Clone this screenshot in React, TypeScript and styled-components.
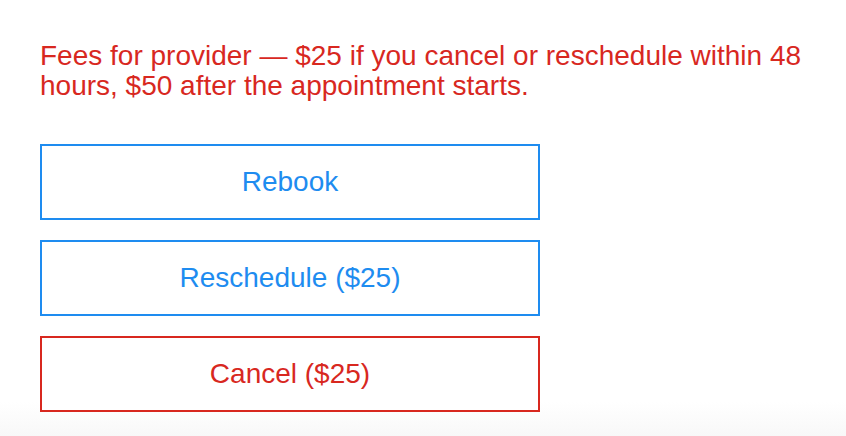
import styled, { createGlobalStyle } from "styled-components";

const GlobalStyle = createGlobalStyle`
  html, body {
    margin: 0;
    padding: 0;
  }
  body {
    height: 436px;
    background: linear-gradient(to bottom, #ffffff 0, #ffffff 402px, #f8f8f8 436px);
    font-family: "Liberation Sans", Arial, sans-serif;
  }
`;

const Page = styled.div`
  padding: 41px 40px 0 40px;
  display: flex;
  flex-direction: column;
`;

const Notice = styled.p`
  margin: 0;
  width: 780px;
  color: #d8281f;
  font-size: 28px;
  line-height: 30px;
`;

const Actions = styled.div`
  margin-top: 43px;
  display: flex;
  flex-direction: column;
  gap: 20px;
  width: 500px;
`;

const ActionButton = styled.button<{ $danger?: boolean }>`
  height: 76px;
  box-sizing: border-box;
  border: 2px solid ${(p) => (p.$danger ? "#d8281f" : "#1e8cf0")};
  color: ${(p) => (p.$danger ? "#d8281f" : "#1e8cf0")};
  background: #fff;
  font-family: "Liberation Sans", Arial, sans-serif;
  font-size: 28px;
  padding: 0;
  cursor: pointer;
`;

function App() {
  return (
    <>
      <GlobalStyle />
      <Page>
        <Notice>
          Fees for provider — $25 if you cancel or reschedule within 48 hours,
          $50 after the appointment starts.
        </Notice>
        <Actions>
          <ActionButton>Rebook</ActionButton>
          <ActionButton>Reschedule ($25)</ActionButton>
          <ActionButton $danger>Cancel ($25)</ActionButton>
        </Actions>
      </Page>
    </>
  );
}

export default App;
